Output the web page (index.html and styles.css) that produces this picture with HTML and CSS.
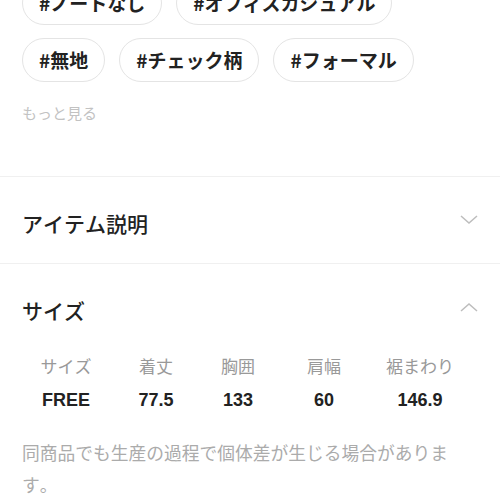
FILE: index.html
```html
<!DOCTYPE html>
<html>
<head>
    <title>Item Detail</title>
    <link rel="stylesheet" href="styles.css">
</head>
<body>
    <div class="page">
        <div class="tags">
            <div class="tagList">
                <span class="tag">#ノートなし</span>
                <span class="tag">#オフィスカジュアル</span>
                <span class="tag">#無地</span>
                <span class="tag">#チェック柄</span>
                <span class="tag">#フォーマル</span>
            </div>
            <div class="more">もっと見る</div>
        </div>

        <div class="section">
            <div class="sectionHead">
                <h2>アイテム説明</h2>
                <svg class="chevron down" width="18" height="10" viewBox="0 0 18 10">
                    <polyline points="1,1 9,8 17,1" fill="none" stroke="#bdbdbd" stroke-width="1.5"/>
                </svg>
            </div>
        </div>

        <div class="section">
            <div class="sectionHead">
                <h2>サイズ</h2>
                <svg class="chevron up" width="18" height="10" viewBox="0 0 18 10">
                    <polyline points="1,9 9,2 17,9" fill="none" stroke="#bdbdbd" stroke-width="1.5"/>
                </svg>
            </div>
            <div class="sizeTable">
                <div class="th">サイズ</div>
                <div class="th">着丈</div>
                <div class="th">胸囲</div>
                <div class="th">肩幅</div>
                <div class="th">裾まわり</div>
                <div class="td">FREE</div>
                <div class="td">77.5</div>
                <div class="td">133</div>
                <div class="td">60</div>
                <div class="td">146.9</div>
            </div>
            <p class="note">同商品でも生産の過程で個体差が生じる場合があります。</p>
        </div>
    </div>
</body>
</html>
```

FILE: styles.css
```css
*{
    padding: 0;
    margin: 0;
    box-sizing: border-box;
}

body{
    font-family: "Noto Sans CJK JP", "Liberation Sans", sans-serif;
    font-kerning: none;
    background: #fff;
    color: #222;
    overflow: hidden;
}

.tags{
    margin-top: -19px;
    height: 196px;
    padding: 0 22px;
    border-bottom: 1px solid #f0f0f0;
}

.tagList{
    display: flex;
    flex-wrap: wrap;
    gap: 13px 14px;
}

.tag{
    height: 44px;
    line-height: 42px;
    padding: 0 16px;
    border: 1px solid #e4e4e4;
    border-radius: 22px;
    font-size: 19px;
    font-weight: bold;
    color: #222;
}

.more{
    margin-top: 22px;
    font-size: 15px;
    line-height: 18px;
    color: #c2c2c2;
}

.section{
    border-bottom: 1px solid #f0f0f0;
}

.section:last-child{
    border-bottom: 0;
}

.sectionHead{
    display: flex;
    justify-content: space-between;
    align-items: flex-start;
    padding: 34px 22px 28px 22px;
}

.sectionHead h2{
    font-size: 21px;
    line-height: 24px;
    font-weight: 500;
    color: #222;
}

.chevron{
    margin-top: 4px;
}

.sizeTable{
    display: grid;
    grid-template-columns: 88px 92px 72px 100px 92px;
    margin: -1px 22px 0 22px;
    text-align: center;
}

.th{
    height: 34px;
    line-height: 34px;
    font-size: 17px;
    color: #999;
}

.td{
    height: 34px;
    line-height: 34px;
    font-family: "Liberation Sans", sans-serif;
    font-size: 18px;
    font-weight: bold;
    color: #222;
}

.note{
    margin-top: 19px;
    padding: 0 40px 0 22px;
    font-size: 17.75px;
    line-height: 32px;
    color: #ababab;
}
```
